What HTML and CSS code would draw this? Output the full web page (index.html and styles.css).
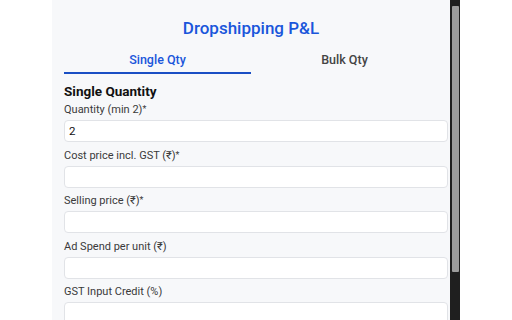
FILE: index.html
```html
<!DOCTYPE html>
<html lang="en">
<head>
<meta charset="utf-8">
<title>Dropshipping P&amp;L</title>
<link rel="stylesheet" href="styles.css">
</head>
<body>
<div class="stage">
  <main class="panel">
    <h1 class="title">Dropshipping P&amp;L</h1>
    <nav class="tabs">
      <div class="tab active">Single Qty</div>
      <div class="tab">Bulk Qty</div>
    </nav>
    <h2 class="section">Single Quantity</h2>
    <div class="field">
      <label class="label">Quantity (min 2)<span class="req">*</span></label>
      <input class="input" type="text" value="2">
    </div>
    <div class="field">
      <label class="label">Cost price incl. GST (₹)<span class="req">*</span></label>
      <input class="input" type="text">
    </div>
    <div class="field">
      <label class="label">Selling price (₹)<span class="req">*</span></label>
      <input class="input" type="text">
    </div>
    <div class="field">
      <label class="label">Ad Spend per unit (₹)</label>
      <input class="input" type="text">
    </div>
    <div class="field">
      <label class="label">GST Input Credit (%)</label>
      <input class="input" type="text">
    </div>
  </main>
  <div class="scrollbar"><div class="thumb"></div></div>
</div>
</body>
</html>
```

FILE: styles.css
```css
html, body {
  margin: 0;
  padding: 0;
  background: #ffffff;
  height: 320px;
  overflow: hidden;
  font-family: Roboto, "Liberation Sans", sans-serif;
}
.stage {
  display: flex;
  padding-left: 52px;
  height: 320px;
}
.panel {
  width: 398px;
  box-sizing: border-box;
  padding: 18px 12px 0;
  background: #f7f8fa;
  height: 320px;
  overflow: hidden;
}
.title {
  margin: 0;
  font-size: 17px;
  line-height: 20px;
  font-weight: 500;
  color: #1a56db;
  text-align: center;
}
.tabs {
  display: flex;
  margin-top: 10px;
}
.tab {
  flex: 1;
  text-align: center;
  font-size: 12.5px;
  line-height: 16px;
  font-weight: 500;
  color: #444444;
  padding: 4px 0 4px;
  border-bottom: 2px solid transparent;
}
.tab.active {
  color: #1a56db;
  border-bottom-color: #1a4fc4;
}
.section {
  margin: 8px 0 2px;
  font-size: 13.5px;
  line-height: 18px;
  font-weight: 700;
  color: #111111;
}
.field {
  margin-bottom: 5.5px;
}
.label {
  display: block;
  font-size: 11px;
  line-height: 15px;
  color: #3a3a3a;
  margin-bottom: 3px;
}
.req {
  font-size: 9px;
  vertical-align: 1px;
}
.input {
  display: block;
  width: 100%;
  box-sizing: content-box;
  height: 20px;
  padding: 0 4px;
  border: 1px solid #e1e3e7;
  border-radius: 4px;
  background: #ffffff;
  font-family: Roboto, "Liberation Sans", sans-serif;
  font-size: 11.5px;
  color: #111111;
  outline: none;
}
.scrollbar {
  width: 10px;
  height: 320px;
  background: #1f1f1f;
  box-sizing: border-box;
  padding: 6px 1.5px 0;
}
.thumb {
  height: 266px;
  background: #9c9c9c;
  border-radius: 1px;
}
```
